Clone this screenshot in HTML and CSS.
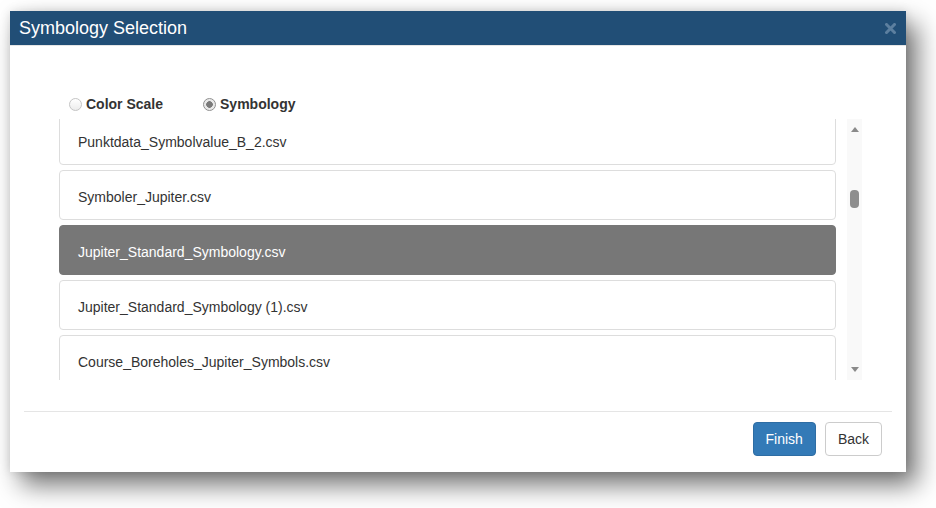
FILE: index.html
```html
<!DOCTYPE html>
<html>
<head>
<meta charset="utf-8">
<link rel="stylesheet" href="styles.css">
</head>
<body>
<div class="stage">
  <div class="modal">
    <div class="modal-header">
      <h4 class="modal-title">Symbology Selection</h4>
      <span class="close" aria-label="Close">
        <svg width="11" height="11" viewBox="0 0 11 11"><path d="M1.5 1.5 L9.5 9.5 M9.5 1.5 L1.5 9.5" stroke="currentColor" stroke-width="3" stroke-linecap="square"/></svg>
      </span>
    </div>
    <div class="modal-body">
      <div class="radios">
        <label class="radio"><input type="radio" name="mode"> Color Scale</label>
        <label class="radio"><input type="radio" name="mode" checked> Symbology</label>
      </div>
      <div class="list-frame">
        <div class="viewport">
          <div class="list">
            <div class="item">Punktdata_Symbolvalue_B_2.csv</div>
            <div class="item">Symboler_Jupiter.csv</div>
            <div class="item active">Jupiter_Standard_Symbology.csv</div>
            <div class="item">Jupiter_Standard_Symbology (1).csv</div>
            <div class="item">Course_Boreholes_Jupiter_Symbols.csv</div>
          </div>
        </div>
        <div class="scrollbar">
          <span class="arrow up"></span>
          <div class="track"><span class="thumb"></span></div>
          <span class="arrow down"></span>
        </div>
      </div>
    </div>
    <div class="modal-footer">
      <button class="btn btn-primary">Finish</button>
      <button class="btn btn-default">Back</button>
    </div>
  </div>
</div>
</body>
</html>
```

FILE: styles.css
```css
html, body {
  margin: 0;
  padding: 0;
  background: #ffffff;
}
body {
  font-family: "Liberation Sans", Arial, sans-serif;
  color: #333333;
  min-height: 508px;
}
.stage {
  padding: 11px 0 36px 10px;
}
.modal {
  width: 896px;
  height: 461px;
  background: #ffffff;
  box-shadow: 11px 13px 24px rgba(0, 0, 0, 0.55), 0 0 10px rgba(0, 0, 0, 0.12);
  display: flex;
  flex-direction: column;
}
.modal-header {
  height: 34px;
  background: #214e76;
  border-bottom: 1px solid #e5e5e5;
  display: flex;
  align-items: center;
  justify-content: space-between;
  padding: 0 10px 0 9px;
}
.modal-title {
  margin: 0;
  font-size: 18px;
  font-weight: normal;
  line-height: 34px;
  color: #ffffff;
}
.close {
  color: #5c7f9f;
  display: flex;
}
.modal-body {
  padding: 48px 0 31px 49px;
  height: 286px;
}
.radios {
  display: flex;
  height: 20px;
  align-items: center;
  padding-left: 10px;
  gap: 40px;
}
.radio {
  display: flex;
  align-items: center;
  font-size: 14px;
  font-weight: bold;
  line-height: 20px;
  color: #333333;
}
.radio input {
  appearance: none;
  -webkit-appearance: none;
  width: 13px;
  height: 13px;
  margin: 0 4px 0 0;
  border-radius: 50%;
  border: 1px solid #c4c4c4;
  background: linear-gradient(#ffffff, #ececec);
  box-sizing: border-box;
}
.radio input:checked {
  border-color: #8f8f8f;
  background: radial-gradient(circle, #7a7a7a 0, #7a7a7a 3px, #e6e6e6 3.6px, #f4f4f4 100%);
}
.list-frame {
  margin-top: 5px;
  display: flex;
  gap: 11px;
  height: 261px;
}
.viewport {
  width: 777px;
  height: 261px;
  overflow: hidden;
}
.list {
  margin-top: -4px;
}
.item {
  border: 1px solid #dddddd;
  border-radius: 4px;
  padding: 16px 18px 0 18px;
  box-sizing: border-box;
  height: 50px;
  margin-bottom: 5px;
  font-size: 14px;
  line-height: 20px;
  color: #333333;
  background: #ffffff;
}
.item.active {
  background: #777777;
  border-color: #777777;
  color: #ffffff;
}
.scrollbar {
  width: 15px;
  background: #f9f9f9;
  display: flex;
  flex-direction: column;
  align-items: center;
  padding: 8px 0 8px;
  box-sizing: border-box;
}
.arrow {
  width: 0;
  height: 0;
  border-left: 4.5px solid transparent;
  border-right: 4.5px solid transparent;
}
.arrow.up {
  border-bottom: 5px solid #8a8a8a;
}
.arrow.down {
  border-top: 5px solid #8a8a8a;
}
.track {
  flex: 1;
  width: 100%;
  display: flex;
  justify-content: center;
  padding-top: 58px;
  box-sizing: border-box;
}
.thumb {
  width: 9px;
  height: 18px;
  border-radius: 4px;
  background: #8e8e8e;
}
.modal-footer {
  margin: 0 14px;
  border-top: 1px solid #e5e5e5;
  padding: 10px 10px 16px 0;
  display: flex;
  justify-content: flex-end;
  gap: 9px;
}
.btn {
  font-family: "Liberation Sans", Arial, sans-serif;
  font-size: 14px;
  line-height: 20px;
  padding: 6px 12px;
  border-radius: 4px;
  border: 1px solid transparent;
  height: 34px;
  box-sizing: border-box;
}
.btn-primary {
  background: #337ab7;
  border-color: #2e6da4;
  color: #ffffff;
}
.btn-default {
  background: #ffffff;
  border-color: #cccccc;
  color: #333333;
}
```
